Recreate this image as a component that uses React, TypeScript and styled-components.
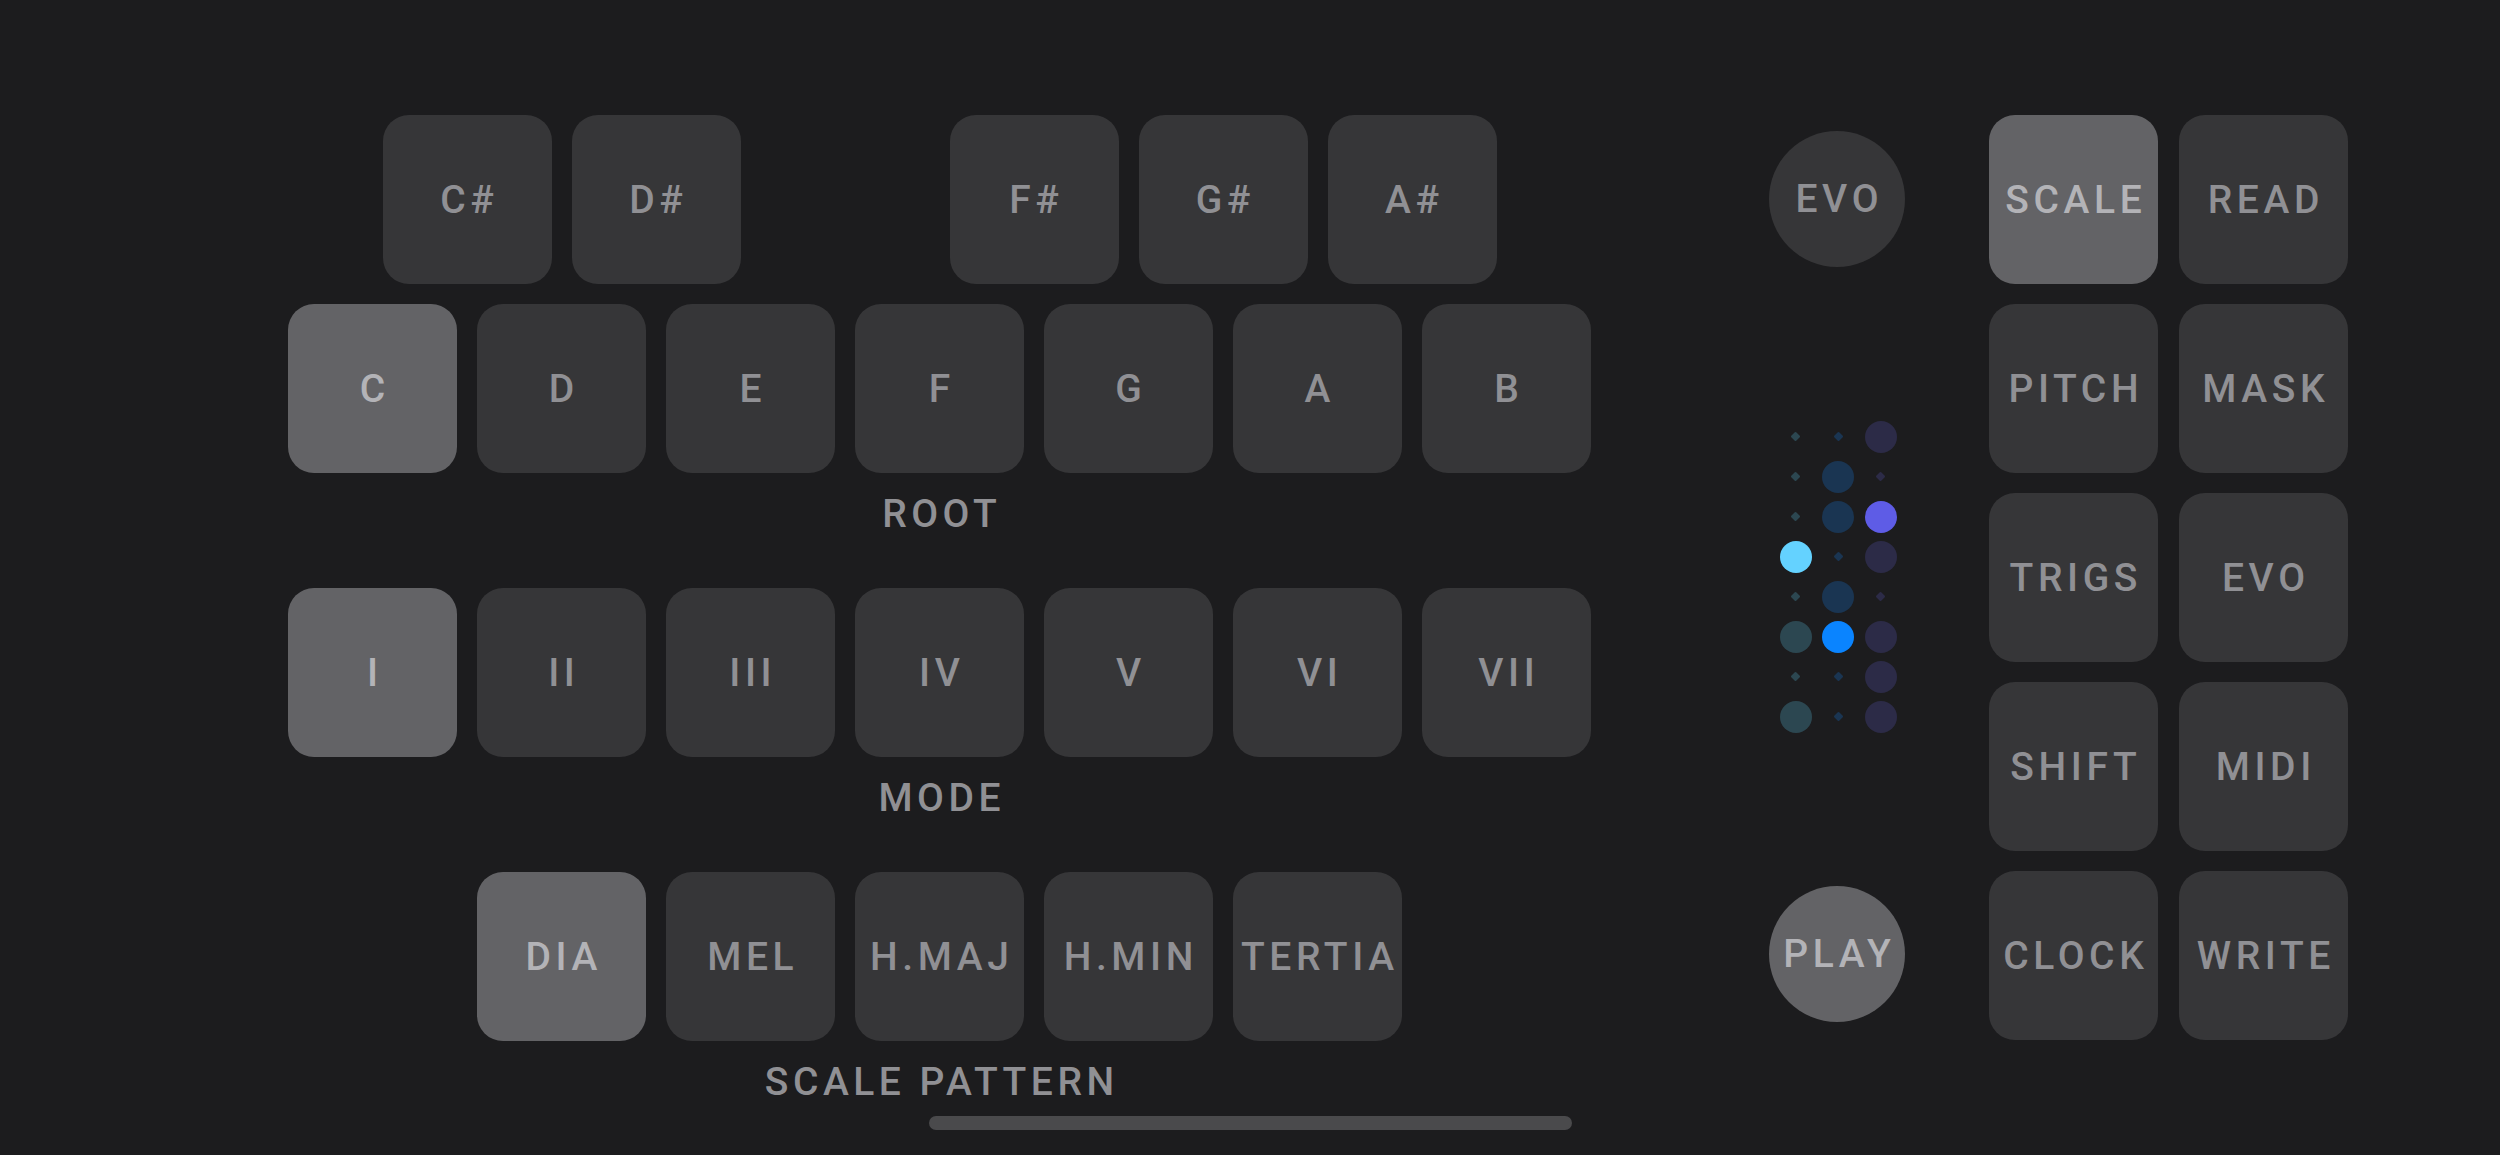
import React from 'react';
import styled, { createGlobalStyle } from 'styled-components';

const GlobalStyle = createGlobalStyle`
  html, body {
    margin: 0;
    padding: 0;
    background: #1c1c1e;
  }
  body {
    font-family: Roboto, "Liberation Sans", sans-serif;
  }
`;

const Screen = styled.div`
  width: 2500px;
  height: 1155px;
  display: flex;
  flex-direction: column;
  background: #1c1c1e;
  overflow: hidden;
`;

const Main = styled.div`
  display: flex;
  flex-direction: row;
  align-items: flex-start;
  padding: 115px 0 0 288px;
`;

const Keyboard = styled.div`
  display: flex;
  flex-direction: column;
  width: 1303px;
`;

const KeyRow = styled.div<{ $indent?: number; $below?: number }>`
  display: flex;
  flex-direction: row;
  gap: 20px;
  padding-left: ${(p) => p.$indent ?? 0}px;
  margin-bottom: ${(p) => p.$below ?? 0}px;
`;

const Key = styled.div<{ $active?: boolean }>`
  width: 169px;
  height: 169px;
  flex: none;
  border-radius: 26px;
  background: ${(p) => (p.$active ? '#636366' : '#363638')};
  color: ${(p) => (p.$active ? '#b3b3b7' : '#909094')};
  display: flex;
  align-items: center;
  justify-content: center;
  font-size: 39px;
  font-weight: 500;
  letter-spacing: 4.6px;
  padding-left: 4.6px;
  box-sizing: border-box;
  white-space: nowrap;
`;

const Gap = styled.div`
  width: 169px;
  flex: none;
`;

const SectionLabel = styled.div`
  height: 28px;
  line-height: 28px;
  margin: 27px 0 60px;
  text-align: center;
  color: #909094;
  font-size: 39px;
  font-weight: 500;
  letter-spacing: 4.5px;
  padding-left: 4.5px;

  &:last-child {
    margin-bottom: 0;
  }
`;

const Transport = styled.div`
  width: 136px;
  height: 891px;
  margin: 16px 0 0 178px;
  display: flex;
  flex-direction: column;
  align-items: center;
  justify-content: space-between;
`;

const RoundButton = styled.div<{ $active?: boolean }>`
  width: 136px;
  height: 136px;
  border-radius: 50%;
  background: ${(p) => (p.$active ? '#636366' : '#363638')};
  color: ${(p) => (p.$active ? '#b3b3b7' : '#909094')};
  display: flex;
  align-items: center;
  justify-content: center;
  font-size: 39px;
  font-weight: 500;
  letter-spacing: 4.6px;
  padding-left: 4.6px;
  box-sizing: border-box;
`;

const DotGrid = styled.div`
  display: grid;
  grid-template-columns: repeat(3, 42.5px);
  grid-auto-rows: 40px;
  margin-left: 2px;
`;

const DotCell = styled.div`
  display: flex;
  align-items: center;
  justify-content: center;
`;

const BigDot = styled.div<{ $color: string }>`
  width: 32px;
  height: 32px;
  border-radius: 50%;
  background: ${(p) => p.$color};
`;

const SmallDot = styled.div<{ $color: string }>`
  width: 7px;
  height: 7px;
  border-radius: 1px;
  transform: rotate(45deg);
  background: ${(p) => p.$color};
`;

const FunctionGrid = styled.div`
  display: grid;
  grid-template-columns: repeat(2, 169px);
  column-gap: 21px;
  row-gap: 20px;
  margin-left: 84px;
`;

const HomeIndicator = styled.div`
  width: 643px;
  height: 14px;
  flex: none;
  border-radius: 7px;
  background: #4a4a4c;
  margin: auto auto 25px;
`;

const tones = [
  { lit: '#64d2ff', dim: '#2c4751' },
  { lit: '#0a84ff', dim: '#1a3552' },
  { lit: '#5e5ce6', dim: '#2c2b47' },
];

// s = small marker, B = big dim dot, L = big lit dot
const pattern = ['ssB', 'sBs', 'sBL', 'LsB', 'sBs', 'BLB', 'ssB', 'BsB'];

const sharps = ['C#', 'D#', null, 'F#', 'G#', 'A#'];
const naturals = ['C', 'D', 'E', 'F', 'G', 'A', 'B'];
const modes = ['I', 'II', 'III', 'IV', 'V', 'VI', 'VII'];
const scales = ['DIA', 'MEL', 'H.MAJ', 'H.MIN', 'TERTIA'];
const functions = ['SCALE', 'READ', 'PITCH', 'MASK', 'TRIGS', 'EVO', 'SHIFT', 'MIDI', 'CLOCK', 'WRITE'];

export default function App() {
  return (
    <Screen>
      <GlobalStyle />
      <Main>
        <Keyboard>
          <KeyRow $indent={94.5} $below={20}>
            {sharps.map((n, i) => (n ? <Key key={i}>{n}</Key> : <Gap key={i} />))}
          </KeyRow>
          <KeyRow>
            {naturals.map((n) => (
              <Key key={n} $active={n === 'C'}>{n}</Key>
            ))}
          </KeyRow>
          <SectionLabel>ROOT</SectionLabel>
          <KeyRow>
            {modes.map((n) => (
              <Key key={n} $active={n === 'I'}>{n}</Key>
            ))}
          </KeyRow>
          <SectionLabel>MODE</SectionLabel>
          <KeyRow $indent={189}>
            {scales.map((n) => (
              <Key key={n} $active={n === 'DIA'}>{n}</Key>
            ))}
          </KeyRow>
          <SectionLabel>SCALE PATTERN</SectionLabel>
        </Keyboard>

        <Transport>
          <RoundButton>EVO</RoundButton>
          <DotGrid>
            {pattern.map((row, r) =>
              row.split('').map((c, i) => (
                <DotCell key={`${r}-${i}`}>
                  {c === 's' ? (
                    <SmallDot $color={tones[i].dim} />
                  ) : (
                    <BigDot $color={c === 'L' ? tones[i].lit : tones[i].dim} />
                  )}
                </DotCell>
              ))
            )}
          </DotGrid>
          <RoundButton $active>PLAY</RoundButton>
        </Transport>

        <FunctionGrid>
          {functions.map((f) => (
            <Key key={f} $active={f === 'SCALE'}>{f}</Key>
          ))}
        </FunctionGrid>
      </Main>
      <HomeIndicator />
    </Screen>
  );
}
